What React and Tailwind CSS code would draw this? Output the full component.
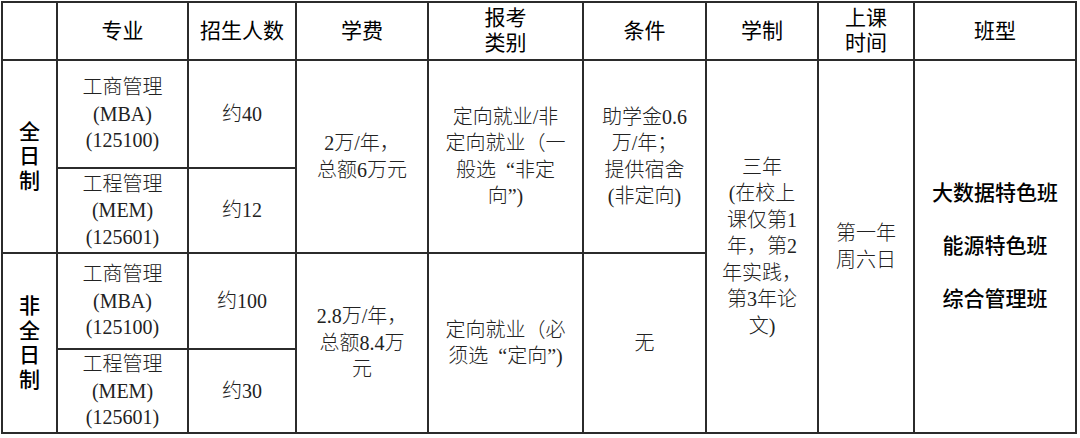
import React from "react";

const cols = [55, 131, 108, 132, 155, 123, 112, 96, 162];

const Lines = ({ lines }) =>
  lines.map((l, i) => (
    <React.Fragment key={i}>
      {i > 0 && <br />}
      {l}
    </React.Fragment>
  ));

const th = "border-2 border-[#2b2b2b] text-center align-middle text-[21px] leading-[25px] text-black font-normal";
const td = "border-2 border-[#2b2b2b] text-center align-middle text-[20px] leading-[26.5px] text-[#222] font-light";
const side = "border-2 border-[#2b2b2b] text-center align-middle text-[21px] leading-[24.5px] text-black font-medium";

export default function App() {
  return (
    <div
      className="w-[1080px] h-[438px] bg-white pt-[1px] pl-[1px]"
      style={{ fontFamily: '"Liberation Serif", "Noto Sans CJK SC", serif' }}
    >
      <table className="table-fixed border-collapse border-2 border-[#2b2b2b] w-[1076px]">
        <colgroup>
          {cols.map((w, i) => (
            <col key={i} style={{ width: w }} />
          ))}
        </colgroup>
        <thead>
          <tr className="h-[58px]">
            <th className={th}></th>
            <th className={th}>专业</th>
            <th className={th}>招生人数</th>
            <th className={th}>学费</th>
            <th className={th}>
              <Lines lines={["报考", "类别"]} />
            </th>
            <th className={th}>条件</th>
            <th className={th}>学制</th>
            <th className={th}>
              <Lines lines={["上课", "时间"]} />
            </th>
            <th className={th}>班型</th>
          </tr>
        </thead>
        <tbody>
          <tr className="h-[108px]">
            <td rowSpan={2} className={side}>
              <Lines lines={["全", "日", "制"]} />
            </td>
            <td className={td}>
              <Lines lines={["工商管理", "(MBA)", "(125100)"]} />
            </td>
            <td className={td}>约40</td>
            <td rowSpan={2} className={td}>
              <Lines lines={["2万/年，", "总额6万元"]} />
            </td>
            <td rowSpan={2} className={td}>
              <Lines lines={["定向就业/非", "定向就业（一", "般选\u2002“非定", "向”)"]} />
            </td>
            <td rowSpan={2} className={td}>
              <Lines lines={["助学金0.6", "万/年；", "提供宿舍", "(非定向)"]} />
            </td>
            <td rowSpan={4} className={td}>
              <Lines
                lines={["三年", "(在校上", "课仅第1", "年，第2", "年实践，", "第3年论", "文)"]}
              />
            </td>
            <td rowSpan={4} className={td}>
              <Lines lines={["第一年", "周六日"]} />
            </td>
            <td rowSpan={4} className={side + " !leading-[53px]"}>
              <Lines lines={["大数据特色班", "能源特色班", "综合管理班"]} />
            </td>
          </tr>
          <tr className="h-[85px]">
            <td className={td}>
              <Lines lines={["工程管理", "(MEM)", "(125601)"]} />
            </td>
            <td className={td}>约12</td>
          </tr>
          <tr className="h-[96px]">
            <td rowSpan={2} className={side}>
              <Lines lines={["非", "全", "日", "制"]} />
            </td>
            <td className={td}>
              <Lines lines={["工商管理", "(MBA)", "(125100)"]} />
            </td>
            <td className={td}>约100</td>
            <td rowSpan={2} className={td}>
              <Lines lines={["2.8万/年，", "总额8.4万", "元"]} />
            </td>
            <td rowSpan={2} className={td}>
              <Lines lines={["定向就业（必", "须选\u2002“定向”)"]} />
            </td>
            <td rowSpan={2} className={td}>无</td>
          </tr>
          <tr className="h-[84px]">
            <td className={td}>
              <Lines lines={["工程管理", "(MEM)", "(125601)"]} />
            </td>
            <td className={td}>约30</td>
          </tr>
        </tbody>
      </table>
    </div>
  );
}
